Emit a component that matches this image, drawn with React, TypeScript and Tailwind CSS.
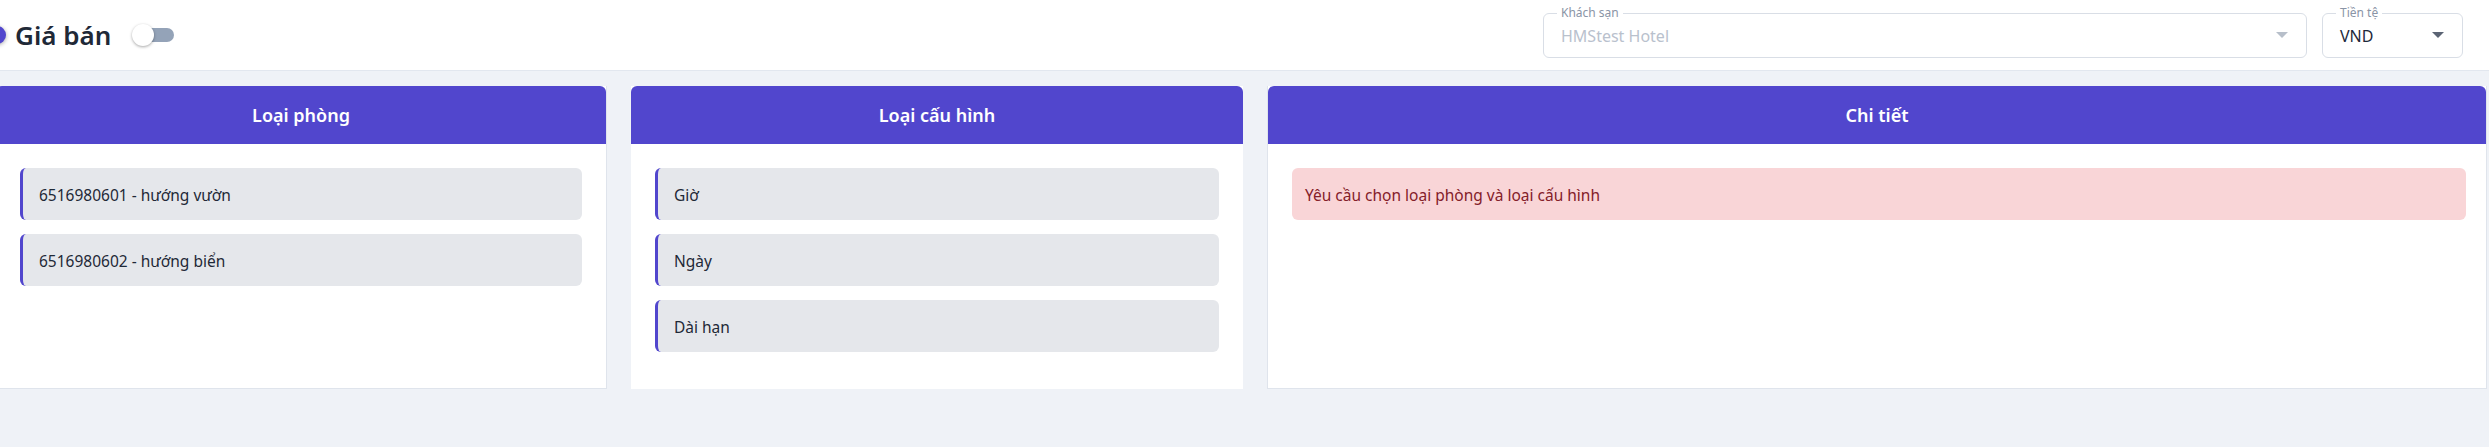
import React from 'react';

const roomTypes = ['6516980601 - hướng vườn', '6516980602 - hướng biển'];
const configTypes = ['Giờ', 'Ngày', 'Dài hạn'];

function OutlinedSelect({
  label,
  value,
  disabled,
  className,
}: {
  label: string;
  value: string;
  disabled?: boolean;
  className?: string;
}) {
  return (
    <div className={`relative flex h-[45px] items-center rounded-md border border-[#d9dee6] bg-white pl-[17px] pr-[18px] ${className ?? ''}`}>
      <span className="absolute -top-[8px] left-[13px] bg-white px-[4px] text-[12px] leading-[14px] text-[#8a94a6]">{label}</span>
      <span className={`flex-1 pt-[2px] text-[16px] ${disabled ? 'text-[#b9c1cd]' : 'text-[#1e293b]'}`}>{value}</span>
      <span
        className={`h-0 w-0 border-x-[6px] border-t-[6px] border-x-transparent ${
          disabled ? 'border-t-[#b7bfca]' : 'border-t-[#5b6474]'
        }`}
      />
    </div>
  );
}

function Panel({
  title,
  bordered,
  className,
  children,
}: {
  title: string;
  bordered?: boolean;
  className?: string;
  children: React.ReactNode;
}) {
  return (
    <div className={`flex h-[303px] shrink-0 flex-col bg-white ${bordered ? 'border-r border-b border-[#dfe4ec]' : ''} ${className ?? ''}`}>
      <div className="flex h-[58px] items-center justify-center rounded-t-md bg-[#5146cd]">
        <h2 className="text-[18px] font-semibold text-white">{title}</h2>
      </div>
      <div className="flex flex-col gap-[14px] px-6 pt-[24px]">{children}</div>
    </div>
  );
}

function ListItem({ label }: { label: string }) {
  return (
    <div className="flex h-[52px] items-center rounded-md border-l-[3px] border-[#5146cd] bg-[#e5e7eb] px-4 pt-[3px] text-[15.5px] text-[#1f2937]">
      {label}
    </div>
  );
}

export default function App() {
  return (
    <div className="min-h-[447px] overflow-hidden bg-[#eff2f7] font-['Noto_Sans',sans-serif]">
      <header className="flex h-[71px] items-center justify-between border-b border-[#e2e7ef] bg-white">
        <div className="flex items-center">
          <span className="-ml-[12px] h-[18px] w-[18px] rounded-full bg-[#5146cd] shadow-[0_1px_4px_rgba(0,0,0,0.35)]" />
          <h1 className="ml-[9px] text-[26px] font-semibold text-[#1f2937]">Giá bán</h1>
          <div className="relative ml-[21px] flex h-[24px] w-[44px] items-center">
            <span className="ml-[3px] h-[14px] w-[39px] rounded-full bg-[#94a3b8]" />
            <span className="absolute left-0 top-[1px] h-[22px] w-[22px] rounded-full bg-white shadow-[0_1px_3px_rgba(0,0,0,0.35)]" />
          </div>
        </div>
        <div className="mr-[26px] flex items-center gap-[15px]">
          <OutlinedSelect label="Khách sạn" value="HMStest Hotel" disabled className="w-[764px]" />
          <OutlinedSelect label="Tiền tệ" value="VND" className="w-[141px]" />
        </div>
      </header>

      <main className="-ml-[4px] flex gap-6 pt-[15px]">
        <Panel title="Loại phòng" bordered className="w-[611px]">
          {roomTypes.map(r => (
            <ListItem key={r} label={r} />
          ))}
        </Panel>
        <Panel title="Loại cấu hình" className="w-[612px]">
          {configTypes.map(c => (
            <ListItem key={c} label={c} />
          ))}
        </Panel>
        <Panel title="Chi tiết" bordered className="w-[1220px] border-l">
          <div className="-mr-[4px] flex h-[52px] items-center rounded-md bg-[#f9d5d7] px-[13px] pt-[3px] text-[15.5px] text-[#842029]">
            Yêu cầu chọn loại phòng và loại cấu hình
          </div>
        </Panel>
      </main>
    </div>
  );
}
